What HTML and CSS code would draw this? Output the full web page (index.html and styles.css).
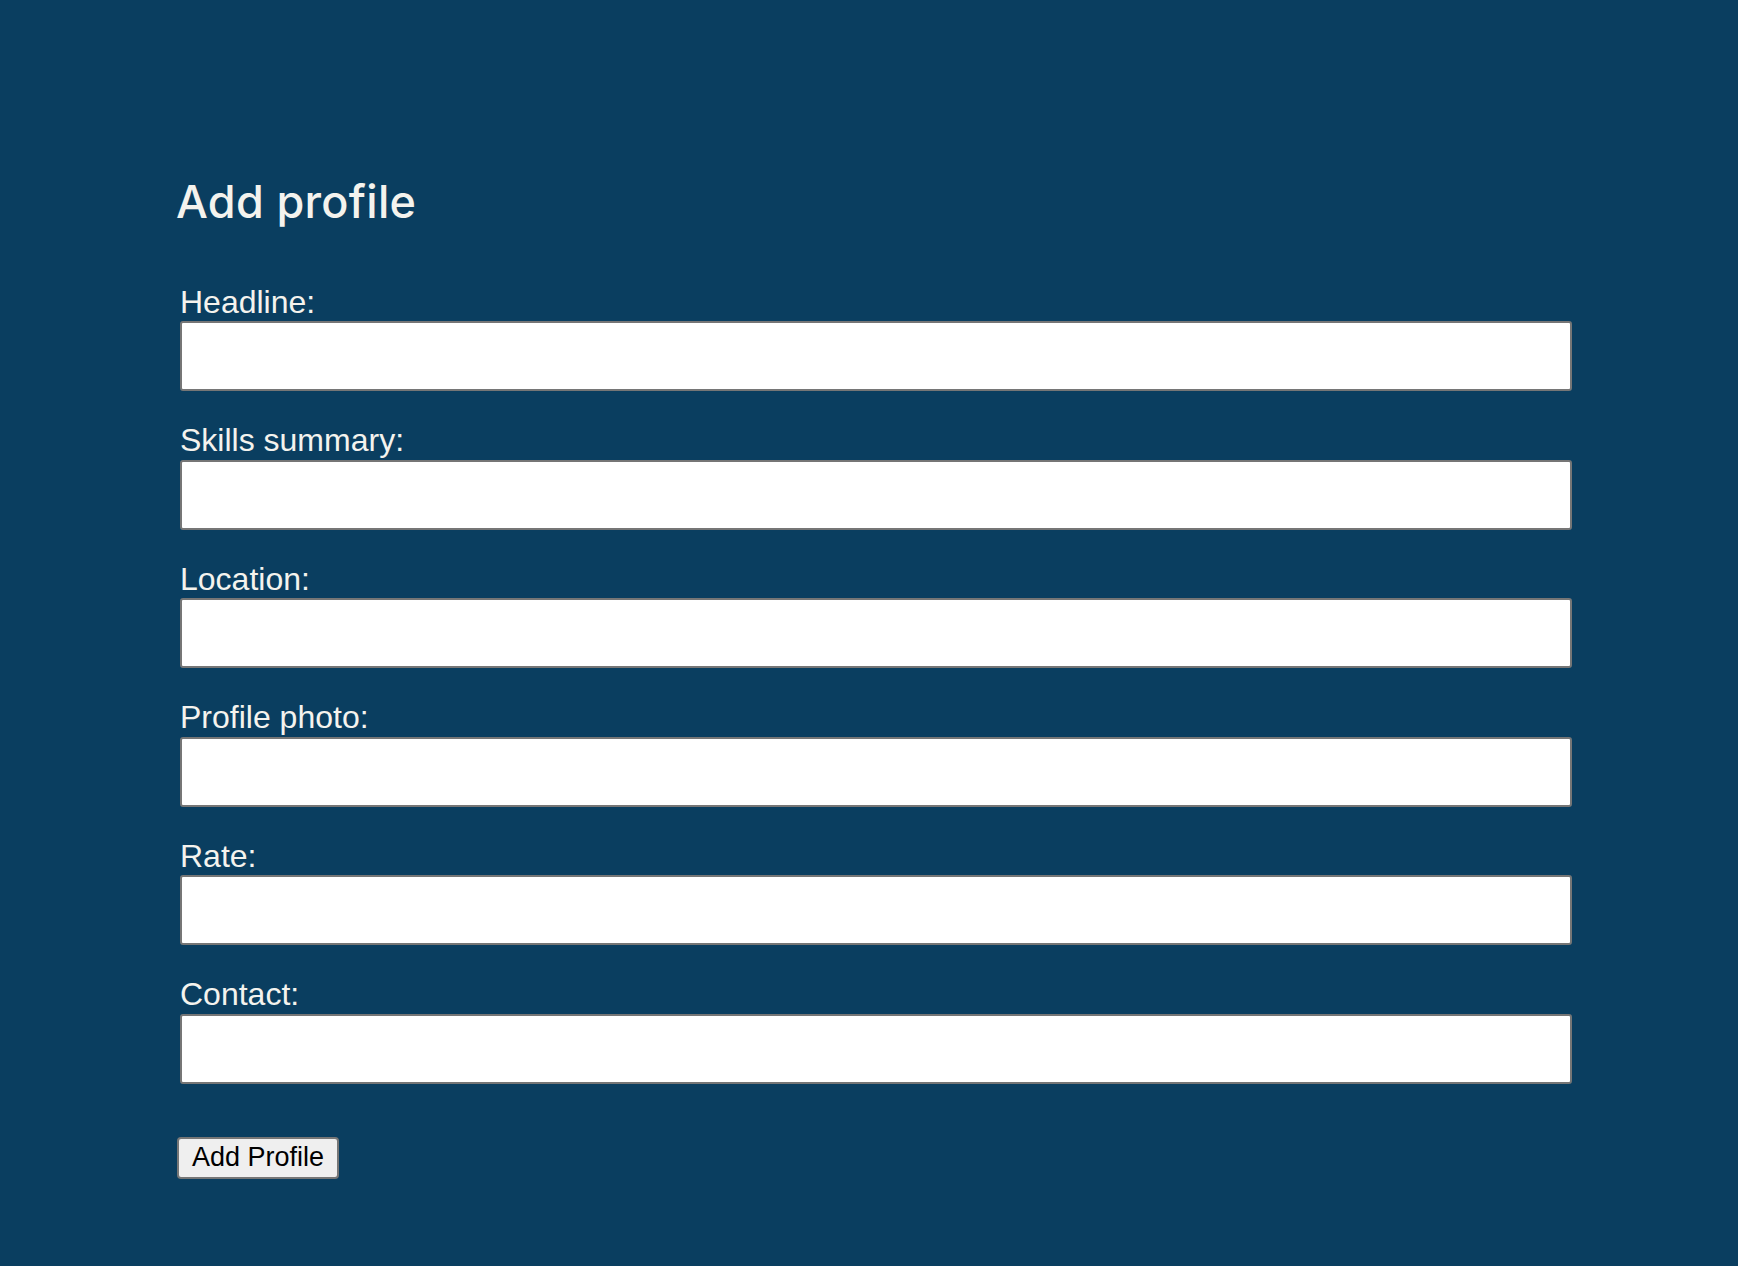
FILE: index.html
```html
<!DOCTYPE html>
<html lang="en">
<head>
<meta charset="utf-8">
<title>Add profile</title>
<link rel="stylesheet" href="styles.css">
</head>
<body>
<main class="page">
  <h1 class="title">Add profile</h1>
  <form class="form">
    <div class="field">
      <label class="label" for="headline">Headline:</label>
      <input class="input" id="headline" type="text">
    </div>
    <div class="field">
      <label class="label" for="skills">Skills summary:</label>
      <input class="input" id="skills" type="text">
    </div>
    <div class="field">
      <label class="label" for="location">Location:</label>
      <input class="input" id="location" type="text">
    </div>
    <div class="field">
      <label class="label" for="photo">Profile photo:</label>
      <input class="input" id="photo" type="text">
    </div>
    <div class="field">
      <label class="label" for="rate">Rate:</label>
      <input class="input" id="rate" type="text">
    </div>
    <div class="field">
      <label class="label" for="contact">Contact:</label>
      <input class="input" id="contact" type="text">
    </div>
    <button class="submit" type="button">Add Profile</button>
  </form>
</main>
</body>
</html>
```

FILE: styles.css
```css
html, body {
  margin: 0;
  padding: 0;
  background: #0a3e60;
  min-height: 100%;
}

body {
  font-family: "Liberation Sans", Arial, sans-serif;
  color: #f4f3ee;
}

.page {
  padding: 174px 0 0 177px;
}

.title {
  margin: 0 0 0 -1px;
  font-family: Inter, "Noto Sans", sans-serif;
  font-weight: 500;
  font-size: 45px;
  line-height: normal;
  color: #f4f3ee;
  letter-spacing: 0.3px;
}

.form {
  margin-top: 55.5px;
  display: flex;
  flex-direction: column;
  align-items: flex-start;
}

.field {
  display: flex;
  flex-direction: column;
  margin-left: 3px;
  width: 1392px;
  margin-bottom: 32px;
}

.label {
  font-size: 32px;
  line-height: 34.5px;
  margin-bottom: 2px;
  color: #f4f3ee;
}

.input {
  box-sizing: border-box;
  height: 70px;
  width: 100%;
  margin: 0;
  border: 2px solid #767676;
  border-radius: 3px;
  background: #ffffff;
  font-family: "Liberation Sans", Arial, sans-serif;
  font-size: 24px;
  padding: 0 8px;
}

.submit {
  box-sizing: border-box;
  margin-top: 21px;
  height: 42px;
  padding: 0 13px;
  border: 2px solid #767676;
  border-radius: 4px;
  background: #efefef;
  color: #000000;
  font-family: "Liberation Sans", Arial, sans-serif;
  font-size: 27px;
  line-height: normal;
}
```
